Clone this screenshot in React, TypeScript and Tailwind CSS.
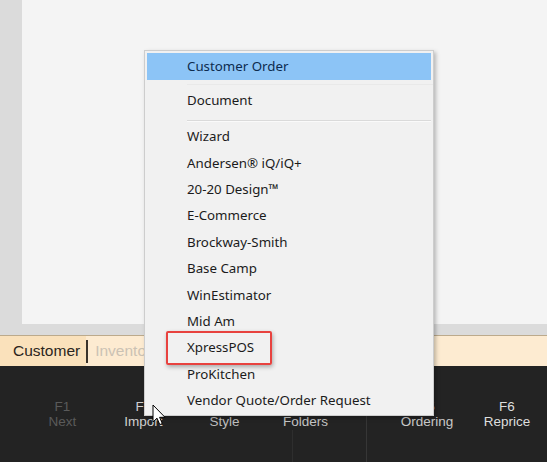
import React from "react";

const menuFont = { fontFamily: '"Noto Sans", "Open Sans", sans-serif' };
const barFont = { fontFamily: '"Liberation Sans", Arial, sans-serif' };

type FKey = { key: string; label: string; tone: string };

const leftKeys: FKey[] = [
  { key: "F1", label: "Next", tone: "text-[#5a5a5a]" },
  { key: "F2", label: "Import", tone: "text-[#cfcfcf]" },
  { key: "F3", label: "Style", tone: "text-[#bdbdbd]" },
  { key: "F4", label: "Folders", tone: "text-[#c4c4c4]" },
];

const rightKeys: FKey[] = [
  { key: "F5", label: "Ordering", tone: "text-[#c8c8c8]" },
  { key: "F6", label: "Reprice", tone: "text-[#dedede]" },
];

const integrations = [
  "Wizard",
  "Andersen® iQ/iQ+",
  "20-20 Design™",
  "E-Commerce",
  "Brockway-Smith",
  "Base Camp",
  "WinEstimator",
  "Mid Am",
  "XpressPOS",
  "ProKitchen",
  "Vendor Quote/Order Request",
];

function KeyButton({ k, w }: { k: FKey; w: string }) {
  return (
    <div
      className={`${w} h-full flex flex-col items-center justify-center text-[13.5px] leading-[15px] ${k.tone}`}
    >
      <span>{k.key}</span>
      <span>{k.label}</span>
    </div>
  );
}

function Cursor() {
  return (
    <svg
      width="15"
      height="22"
      viewBox="0 0 15 22"
      className="absolute left-[152px] top-[404px]"
    >
      <path
        d="M1 1 L1 18 L5 14.2 L7.8 20.6 L10.3 19.5 L7.6 13.3 L13 13.3 Z"
        fill="#ffffff"
        stroke="#000000"
        strokeWidth="1"
        strokeLinejoin="miter"
      />
    </svg>
  );
}

function ContextMenu() {
  return (
    <div
      className="absolute left-[144px] top-[50px] w-[290px] h-[366px] bg-[#f1f1f1] border border-[#cdcdcd] shadow-[2px_2px_4px_rgba(0,0,0,0.25)] pt-[2px] text-[13.3px] text-[#1b1b1b]"
      style={menuFont}
    >
      <div className="mx-[2px] h-[27px] flex items-center pl-[40px] bg-[#8cc4f6] text-[#0d2b4e]">
        Customer Order
      </div>
      <div className="h-[8px] pl-[42px] pt-[4px]">
        <div className="h-px bg-[#e9e9e9]" />
      </div>
      <div className="h-[26px] flex items-center pl-[42px]">Document</div>
      <div className="h-[10px] pl-[42px] pt-[6px] pr-[2px]">
        <div className="h-px bg-[#dadada]" />
        <div className="h-px bg-[#fafafa]" />
      </div>
      {integrations.map((name) => (
        <div key={name} className="h-[26.4px] flex items-center pl-[42px]">
          {name}
        </div>
      ))}
    </div>
  );
}

export default function App() {
  return (
    <div className="relative w-[547px] h-[462px] overflow-hidden flex flex-col bg-[#dadada]">
      {/* work area */}
      <div className="h-[335px] flex flex-col bg-[#dbdbdb]">
        <div className="ml-[22px] h-[324px] bg-[#f4f4f4]" />
      </div>

      {/* document tabs */}
      <div
        className="h-[31px] flex items-center border-t border-[#bcaa8c] bg-[#fdebd1] text-[15.5px]"
        style={barFont}
      >
        <div className="h-full flex items-center pl-[13px] pr-[6px] bg-[#fae1bb] text-[#2a2520]">
          Customer
        </div>
        <div className="w-[2px] h-[23px] bg-[#3a332b]" />
        <div className="pl-[7px] text-[#cbc2b4]">Inventory</div>
      </div>

      {/* function key bar */}
      <div className="h-[96px] flex bg-[#232323] pl-[22px]" style={barFont}>
        {leftKeys.map((k, i) => (
          <div key={k.key} className="relative h-full">
            <KeyButton k={k} w="w-[81px]" />
            {i === 3 && (
              <div className="absolute left-[27px] top-[64px] w-px h-[32px] bg-[#2e2e2e]" />
            )}
          </div>
        ))}
        <div className="w-[41px] flex justify-center pt-[50px]">
          <div className="w-px h-full bg-[#363636]" />
        </div>
        {rightKeys.map((k) => (
          <KeyButton key={k.key} k={k} w="w-[80px]" />
        ))}
      </div>

      <ContextMenu />

      {/* highlight around XpressPOS */}
      <div className="absolute left-[166px] top-[331px] w-[106px] h-[34px] border-2 border-[#e8423f] rounded-[2px] shadow-[1px_2px_4px_rgba(0,0,0,0.3)]" />

      <Cursor />
    </div>
  );
}
